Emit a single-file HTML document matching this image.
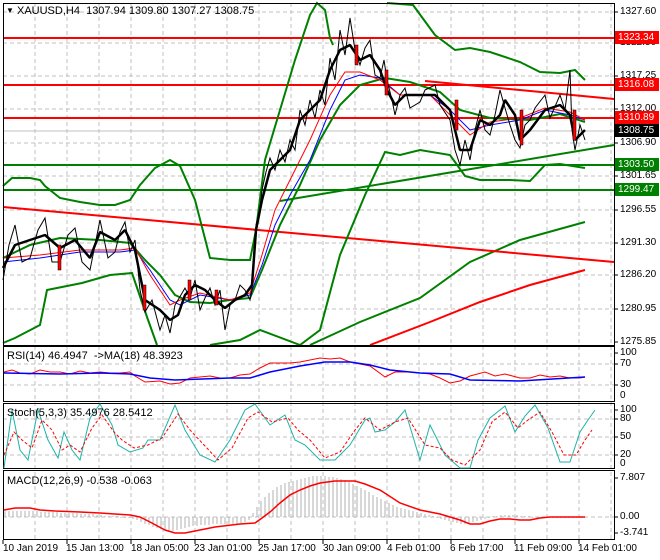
<!DOCTYPE html>
<html><head><meta charset="utf-8"><style>
html,body{margin:0;padding:0;background:#fff;}
body{width:660px;height:560px;position:relative;overflow:hidden;font-family:"Liberation Sans",sans-serif;font-size:10px;color:#000;}
.t{position:absolute;white-space:nowrap;font-size:10px;line-height:12px;}
.box{position:absolute;left:615px;width:41px;height:13px;color:#fff;font-size:10px;line-height:13px;padding-left:3px;}
</style></head><body>
<svg width="660" height="560" style="position:absolute;left:0;top:0" xmlns="http://www.w3.org/2000/svg">
<g fill="none" stroke="#c0c0c0" stroke-dasharray="4,3" stroke-width="1">
<path d="M35 3V345M67 3V345M99 3V345M131 3V345M163 3V345M195 3V345M227 3V345M259 3V345M291 3V345M323 3V345M355 3V345M387 3V345M419 3V345M451 3V345M483 3V345M515 3V345M547 3V345M579 3V345M611 3V345"/>
<path d="M35 346V540M67 346V540M99 346V540M131 346V540M163 346V540M195 346V540M227 346V540M259 346V540M291 346V540M323 346V540M355 346V540M387 346V540M419 346V540M451 346V540M483 346V540M515 346V540M547 346V540M579 346V540M611 346V540"/>
<path d="M3 12H614M3 43H614M3 76H614M3 109H614M3 143H614M3 176H614M3 210H614M3 243H614M3 275H614M3 309H614"/>
<path d="M3 364H614M3 385H614M3 419H614M3 437H614M3 455H614M3 517H614"/>
</g>
<line x1="3" y1="131" x2="614" y2="131" stroke="#c0c0c0"/>
<polyline fill="none" stroke="#008000" stroke-width="2" points="310,345 360,322 420,298 470,262 520,240 585,222"/>
<polyline fill="none" stroke="#ff0000" stroke-width="2" points="370,345 430,322 480,302 530,285 585,270"/>
<line x1="3" y1="207" x2="614" y2="262" stroke="#ff0000" stroke-width="2"/>
<line x1="280" y1="201" x2="614" y2="145" stroke="#008000" stroke-width="2"/>
<line x1="425" y1="81" x2="614" y2="99" stroke="#ff0000" stroke-width="2"/>
<g stroke-width="2">
<line x1="3" y1="38" x2="614" y2="38" stroke="#ff0000"/>
<line x1="3" y1="85" x2="614" y2="85" stroke="#ff0000"/>
<line x1="3" y1="118" x2="614" y2="118" stroke="#ff0000"/>
<line x1="3" y1="165" x2="614" y2="165" stroke="#008000"/>
<line x1="3" y1="190" x2="614" y2="190" stroke="#008000"/>
</g>
<g fill="none" stroke="#008000" stroke-width="2">
<polyline points="3,186 12,178 30,178 40,180 45,186 60,198 80,202 100,205 115,205 130,200 140,185 155,168 170,160 180,166 195,200 210,258 230,260 250,260 256,230 265,160 280,110 295,60 310,15 317,3 325,10 330,38 333,45"/>
<polyline points="387,3 413,5 435,35 455,50 470,48 490,52 520,62 540,72 560,73 575,70 585,80"/>
<polyline points="3,258 30,245 60,238 100,240 130,243 145,260 160,275 175,295 190,302 210,303 230,300 250,298 262,270 280,225 300,185 320,140 340,105 360,85 385,78 410,82 440,92 460,110 490,118 530,120 560,114 585,122"/>
<polyline points="3,343 15,338 40,325 47,290 82,283 110,275 132,273 147,317 157,345"/>
<polyline points="210,345 240,340 260,330 300,345 320,330 340,255 365,195 385,152 400,155 420,150 450,155 465,176 480,180 510,180 530,181 545,165 560,164 585,168"/>
</g>
<polyline fill="none" stroke="#0000ff" stroke-width="1" points="3,262 40,258 80,252 120,252 135,250 150,270 170,300 180,305 200,295 230,300 250,295 262,265 275,225 290,195 310,160 330,110 345,80 360,75 380,78 400,95 430,95 450,110 470,130 490,125 520,120 545,110 570,115 585,120"/>
<polyline fill="none" stroke="#ff0000" stroke-width="1" points="3,258 40,255 80,250 120,250 135,248 150,275 170,305 180,300 200,293 230,300 250,293 262,255 275,210 290,180 310,140 330,95 345,72 360,72 380,80 400,95 430,95 450,115 470,135 490,122 520,118 545,108 570,112 585,120"/>
<polyline fill="none" stroke="#000" stroke-width="1" points="3,280 9,245 15,225 22,262 30,258 38,230 45,218 52,262 60,262 68,235 75,228 82,262 90,270 96,240 100,220 108,258 115,252 120,232 125,222 130,252 135,240 140,290 145,312 152,300 160,330 165,315 170,333 175,305 178,300 185,288 190,298 195,280 200,310 205,298 210,288 215,305 220,290 225,330 230,305 235,300 240,285 245,290 250,300 252,290 256,225 260,210 262,190 266,172 270,158 275,170 280,150 285,162 290,140 295,150 300,110 305,125 310,100 315,118 320,90 325,105 330,58 335,80 340,30 345,55 350,18 355,50 360,65 365,48 370,40 375,75 380,78 384,60 387,80 392,100 395,115 400,95 405,88 410,108 420,102 425,90 435,85 440,105 450,120 455,150 460,165 465,140 470,160 475,130 480,110 485,130 490,135 495,115 500,90 505,108 510,125 515,140 520,148 525,125 530,120 535,108 545,95 550,118 560,95 565,110 570,70 572,130 575,150 580,125 585,140"/>
<polyline fill="none" stroke="#000" stroke-width="2.5" stroke-linejoin="bevel" points="3,268 15,245 30,240 45,235 60,248 75,240 90,258 100,232 115,240 125,230 135,250 145,300 160,310 170,320 178,315 185,295 195,285 205,290 215,300 225,308 235,300 245,295 252,285 256,230 262,200 270,170 280,160 290,150 300,120 310,110 320,100 330,70 340,50 350,45 360,60 370,55 380,70 387,90 395,105 405,95 420,95 435,95 450,110 460,150 470,150 480,120 490,125 500,115 505,100 515,115 520,140 530,130 545,110 560,105 570,115 575,140 585,130"/>
<g fill="#ff0000" stroke="#000" stroke-width="0.5">
<rect x="58" y="245" width="3" height="25"/><rect x="143" y="285" width="3" height="25"/><rect x="188" y="280" width="3" height="20"/><rect x="215" y="290" width="3" height="15"/><rect x="355" y="45" width="3" height="20"/><rect x="385" y="70" width="3" height="25"/><rect x="455" y="100" width="3" height="30"/><rect x="520" y="110" width="3" height="35"/><rect x="573" y="110" width="3" height="30"/>
</g>
<g fill="none" stroke="#000" stroke-width="1">
<rect x="3.5" y="3.5" width="611" height="342"/>
<rect x="3.5" y="346.5" width="611" height="55"/>
<rect x="3.5" y="403.5" width="611" height="65"/>
<rect x="3.5" y="470.5" width="611" height="69"/>
</g>
<g stroke="#000"><path d="M614 12h4M614 43h4M614 76h4M614 109h4M614 143h4M614 176h4M614 210h4M614 243h4M614 275h4M614 309h4M614 342h4M614 353h4M614 364h4M614 385h4M614 410h4M614 419h4M614 437h4M614 455h4M614 478h4M614 517h4M614 533h4"/>
<path d="M3 540v4M67 540v4M131 540v4M195 540v4M259 540v4M323 540v4M387 540v4M451 540v4M515 540v4M579 540v4"/></g>
<polyline fill="none" stroke="#ff0000" stroke-width="1" points="4,372 12,370 20,373 30,374 40,370 50,372 60,372 70,374 80,371 90,373 100,372 110,373 120,373 130,372 135,376 145,382 160,381 170,384 180,383 190,378 200,377 210,376 220,378 230,378 240,375 250,374 260,368 270,363 290,363 300,362 310,360 320,358 330,359 340,358 350,362 360,364 370,366 385,377 395,372 410,372 430,374 440,378 450,383 460,381 470,376 485,372 495,376 505,374 520,378 530,378 540,375 550,377 560,376 570,378 580,378 585,377"/>
<polyline fill="none" stroke="#0000ff" stroke-width="1.5" points="4,373 60,374 100,373 130,374 150,378 175,380 230,378 250,378 270,372 300,366 325,362 350,362 370,365 390,370 420,373 450,374 470,380 520,381 585,377"/>
<polyline fill="none" stroke="#20b2aa" stroke-width="1" points="4,468 12,410 20,450 28,460 38,410 48,440 58,458 64,432 72,450 80,460 90,418 100,404 112,425 118,445 130,452 143,448 148,440 160,440 175,405 185,430 200,455 215,462 230,440 245,410 255,404 270,425 285,415 295,440 305,445 320,460 335,460 350,445 365,420 370,418 375,432 385,430 395,422 405,410 420,460 430,425 445,455 460,468 470,468 478,440 490,418 505,406 515,432 525,416 535,405 548,428 560,462 570,462 580,432 588,420 595,410"/>
<polyline fill="none" stroke="#ff0000" stroke-width="1" stroke-dasharray="3,2" points="4,455 14,432 22,440 32,448 42,420 52,430 62,450 70,445 80,452 92,428 102,415 114,432 122,440 134,448 148,445 162,438 178,414 190,430 205,446 218,460 232,448 248,418 258,412 272,422 288,418 298,430 310,440 325,458 340,452 355,430 365,418 380,430 395,422 408,418 425,445 440,448 452,460 465,465 480,450 492,422 505,412 518,428 528,420 540,412 552,432 564,455 576,455 585,440 592,430"/>
<g stroke="#b0b0b0" stroke-width="1">
<path d="M5 517v-6M9 517v-6M13 517v-6M17 517v-6M21 517v-6M25 517v-6M29 517v-6M33 517v-6M37 517v-6M41 517v-5M45 517v-5M49 517v-5M53 517v-5M57 517v-5M61 517v-4M65 517v-4M69 517v-4M73 517v-4M77 517v-4M81 517v-3M85 517v-3M89 517v-3M93 517v-3M97 517v-2M101 517v-2M105 517v-1M109 517v-1M113 517v-1M117 517v-1M121 517v1M125 517v1M129 517v1M133 517v2M137 517v3M141 517v5M145 517v7M149 517v8M153 517v10M157 517v11M161 517v12M165 517v13M169 517v14M173 517v14M177 517v13M181 517v12M185 517v11M189 517v10M193 517v9M197 517v9M201 517v8M205 517v8M209 517v8M213 517v7M217 517v7M221 517v7M225 517v7M229 517v7M233 517v7M237 517v7M241 517v6M245 517v5M249 517v3M253 517v-4M257 517v-10M261 517v-16M265 517v-20M269 517v-24M273 517v-27M277 517v-30M281 517v-32M285 517v-34M289 517v-35M293 517v-36M297 517v-37M301 517v-38M305 517v-39M309 517v-40M313 517v-41M317 517v-41M321 517v-41M325 517v-41M329 517v-40M333 517v-40M337 517v-39M341 517v-38M345 517v-37M349 517v-35M353 517v-33M357 517v-31M361 517v-29M365 517v-27M369 517v-25M373 517v-22M377 517v-20M381 517v-18M385 517v-16M389 517v-14M393 517v-12M397 517v-10M401 517v-9M405 517v-8M409 517v-7M413 517v-6M417 517v-5M421 517v-4M425 517v-3M429 517v-2M433 517v-1M437 517v1M441 517v2M445 517v3M449 517v4M453 517v5M457 517v6M461 517v7M465 517v7M469 517v6M473 517v5M477 517v4M481 517v3M485 517v2M489 517v1M493 517v-1M497 517v-1M501 517v-2M505 517v-2M509 517v-2M513 517v-2M517 517v-2M521 517v-1M525 517v-1M529 517v-1M533 517v1M537 517v1M541 517v1M545 517v1M549 517v1M553 517v1M557 517v1M561 517v1M565 517v1M569 517v1M573 517v1M577 517v1M581 517v1M585 517v1"/>
</g>
<polyline fill="none" stroke="#ff0000" stroke-width="1.5" points="4,510 15,508 30,508 40,510 55,511 80,512 100,513 130,515 140,517 150,522 165,530 175,533 185,533 200,530 215,527 240,524 255,523 262,518 270,512 280,503 290,495 300,490 310,486 320,483 335,481 355,481 365,484 380,490 400,503 420,510 440,514 460,520 470,524 480,524 490,521 500,519 510,519 520,520 530,520 540,518 550,517 560,517 585,517"/>
</svg>
<div class="t" style="left:6px;top:5px;font-size:8px">&#9660;</div>
<div class="t" style="left:17px;top:5px;font-size:11px">XAUUSD,H4&nbsp; 1307.94 1309.80 1307.27 1308.75</div>
<div class="t" style="left:7px;top:350px;font-size:11px">RSI(14) 46.4947&nbsp; -&gt;MA(18) 48.3923</div>
<div class="t" style="left:7px;top:407px;font-size:11px">Stoch(5,3,3) 35.4976 28.5412</div>
<div class="t" style="left:7px;top:475px;font-size:11px">MACD(12,26,9) -0.538 -0.063</div>
<div class="t" style="left:620px;top:6px">1327.60</div>
<div class="t" style="left:620px;top:37px">1322.50</div>
<div class="t" style="left:620px;top:70px">1317.25</div>
<div class="t" style="left:620px;top:103px">1312.00</div>
<div class="t" style="left:620px;top:137px">1306.90</div>
<div class="t" style="left:620px;top:170px">1301.65</div>
<div class="t" style="left:620px;top:204px">1296.55</div>
<div class="t" style="left:620px;top:237px">1291.30</div>
<div class="t" style="left:620px;top:269px">1286.20</div>
<div class="t" style="left:620px;top:303px">1280.95</div>
<div class="t" style="left:620px;top:336px">1275.85</div>
<div class="box" style="top:31px;background:#ff0000">1323.34</div>
<div class="box" style="top:78px;background:#ff0000">1316.08</div>
<div class="box" style="top:111px;background:#ff0000">1310.89</div>
<div class="box" style="top:124px;background:#000">1308.75</div>
<div class="box" style="top:158px;background:#008000">1303.50</div>
<div class="box" style="top:183px;background:#008000">1299.47</div>
<div class="t" style="left:620px;top:347px">100</div>
<div class="t" style="left:620px;top:358px">70</div>
<div class="t" style="left:620px;top:379px">30</div>
<div class="t" style="left:620px;top:390px">0</div>
<div class="t" style="left:620px;top:404px">100</div>
<div class="t" style="left:620px;top:413px">80</div>
<div class="t" style="left:620px;top:431px">50</div>
<div class="t" style="left:620px;top:449px">20</div>
<div class="t" style="left:620px;top:458px">0</div>
<div class="t" style="left:620px;top:472px">7.807</div>
<div class="t" style="left:620px;top:511px">0.00</div>
<div class="t" style="left:620px;top:527px">-3.741</div>
<div class="t" style="left:3px;top:543px">10 Jan 2019</div>
<div class="t" style="left:66px;top:543px">15 Jan 13:00</div>
<div class="t" style="left:131px;top:543px">18 Jan 05:00</div>
<div class="t" style="left:194px;top:543px">23 Jan 01:00</div>
<div class="t" style="left:258px;top:543px">25 Jan 17:00</div>
<div class="t" style="left:323px;top:543px">30 Jan 09:00</div>
<div class="t" style="left:387px;top:543px">4 Feb 01:00</div>
<div class="t" style="left:450px;top:543px">6 Feb 17:00</div>
<div class="t" style="left:514px;top:543px">11 Feb 09:00</div>
<div class="t" style="left:578px;top:543px">14 Feb 01:00</div>
</body></html>
